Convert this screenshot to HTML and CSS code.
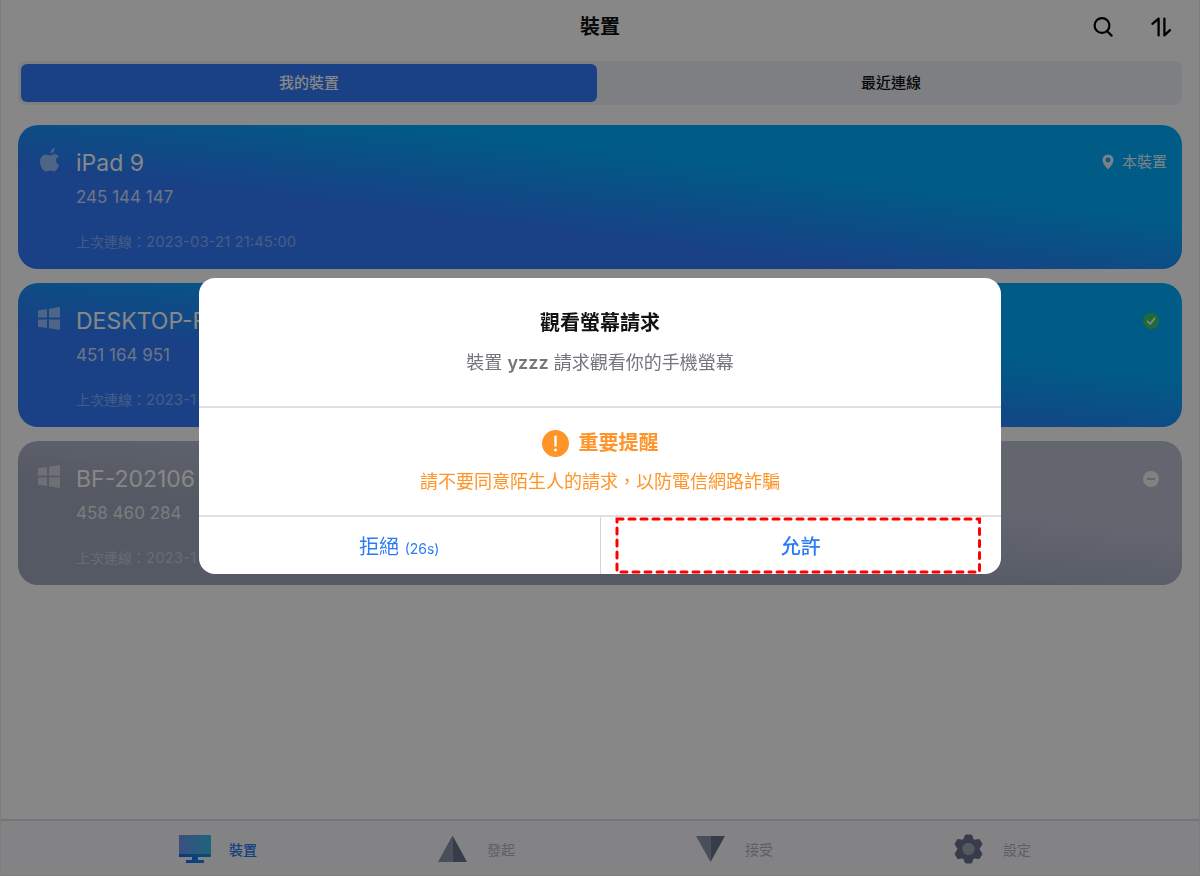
FILE: index.html
```html
<!DOCTYPE html>
<html lang="zh-Hant">
<head>
    <meta charset="UTF-8">
    <meta name="viewport" content="width=device-width, initial-scale=1">
    <title>裝置</title>
    <link rel="stylesheet" href="styles.css">
</head>
<body>
    <div class="app">
        <header class="header">
            <h1>裝置</h1>
            <div class="header-actions">
                <button type="button" class="icon-btn" aria-label="搜尋">
                    <svg width="22" height="22" viewBox="0 0 22 22" fill="none" stroke="#000" stroke-width="2.2" stroke-linecap="round">
                        <circle cx="10" cy="9.5" r="7.4"/>
                        <path d="M15 15l4.6 4.6"/>
                    </svg>
                </button>
                <button type="button" class="icon-btn" aria-label="排序">
                    <svg width="22" height="22" viewBox="0 0 22 22" fill="none" stroke="#000" stroke-width="2.3" stroke-linecap="round" stroke-linejoin="round">
                        <path d="M2.4 7.8L8.6 2.6V19.4M14.4 2.6V19.4L20 14.2"/>
                    </svg>
                </button>
            </div>
        </header>

        <div class="segment">
            <button type="button" class="segment-btn active">我的裝置</button>
            <button type="button" class="segment-btn">最近連線</button>
        </div>

        <main class="devices">
            <article class="device">
                <svg class="device-icon" viewBox="0 0 24 26">
                    <path fill="#fff" d="M12.6 6.4C12.4 3.900 14.400 1.400 16.700 1 17.100 3.700 15 6.200 12.600 6.400zM20.600 9.200C18.800 10.300 17.900 11.700 18 13.600 18.100 15.800 19.300 17.300 21.200 18 20.500 20.300 18.900 23.200 16.900 24.200 15.300 25 14 23.800 12 23.800 10 23.800 8.900 25 7.200 24.300 4.300 23.100 2 18.500 2 14.500 2 10.300 4.600 7.500 7.800 7.400 9.500 7.300 10.900 8.400 12 8.400 13.200 8.400 15 7.200 17.100 7.300 18.600 7.400 19.800 8.100 20.600 9.200z"/>
                </svg>
                <div class="device-info">
                    <h2>iPad 9</h2>
                    <p class="device-id">245 144 147</p>
                    <p class="device-time">上次連線：<span>2023-03-21 21:45:00</span></p>
                </div>
                <div class="device-tag">
                    <svg width="12" height="16" viewBox="0 0 12 16">
                        <path fill="#fff" fill-rule="evenodd" d="M6 .5A5.500 5.500 0 0 0 .5 6C.5 9.400 3.500 12.500 6 15.500 8.500 12.500 11.500 9.400 11.500 6A5.500 5.500 0 0 0 6 .5zM6 3.600a2.400 2.400 0 1 1 0 4.800 2.400 2.400 0 0 1 0-4.800z"/>
                    </svg>
                    <span>本裝置</span>
                </div>
            </article>

            <article class="device">
                <svg class="device-icon" viewBox="0 0 24 26">
                    <path fill="#fff" d="M0 5.300l9-1.200v8.400H0zM11 3.800L22 2v10.500H11zM0 14.500h9v8.400l-9-1.200zM11 14.500h11V25l-11-1.700z"/>
                </svg>
                <div class="device-info">
                    <h2>DESKTOP-F</h2>
                    <p class="device-id">451 164 951</p>
                    <p class="device-time">上次連線：<span>2023-1</span></p>
                </div>
                <svg class="device-status" viewBox="0 0 16 16">
                    <circle cx="8" cy="8" r="8" fill="#3fc86e"/>
                    <path d="M4.600 8.400l2.600 2.600L11.600 5.300" fill="none" stroke="#fff" stroke-width="1.600" stroke-linecap="round"/>
                </svg>
            </article>

            <article class="device offline">
                <svg class="device-icon" viewBox="0 0 24 26">
                    <path fill="#fff" d="M0 5.300l9-1.200v8.400H0zM11 3.800L22 2v10.500H11zM0 14.500h9v8.400l-9-1.200zM11 14.500h11V25l-11-1.700z"/>
                </svg>
                <div class="device-info">
                    <h2>BF-202106</h2>
                    <p class="device-id">458 460 284</p>
                    <p class="device-time">上次連線：<span>2023-1</span></p>
                </div>
                <svg class="device-status" viewBox="0 0 16 16">
                    <circle cx="8" cy="8" r="8" fill="#f4f4f4"/>
                    <path d="M4 8h8" stroke="#a9b0c3" stroke-width="1.500"/>
                </svg>
            </article>
        </main>

        <nav class="tabbar">
            <a href="#devices" class="tab active">
                <svg width="32" height="30" viewBox="0 0 32 30">
                    <defs>
                        <linearGradient id="screen">
                            <stop offset="0" stop-color="#6f95f5"/>
                            <stop offset="1" stop-color="#35c0e8"/>
                        </linearGradient>
                        <linearGradient id="stand">
                            <stop offset="0" stop-color="#2563e8"/>
                            <stop offset="1" stop-color="#1296ea"/>
                        </linearGradient>
                    </defs>
                    <path fill="url(#screen)" d="M0 1h32v19H0z"/>
                    <path fill="url(#stand)" d="M0 20h32v3H19v3h6v3H7v-3h6v-3H0z"/>
                </svg>
                <span>裝置</span>
            </a>
            <a href="#send" class="tab">
                <svg width="32" height="30" viewBox="0 0 32 30">
                    <path fill="#8b93ab" d="M15.500 1.500L1 28H15.500z"/>
                    <path fill="#69718a" d="M15.500 1.500L30 28H15.500z"/>
                </svg>
                <span>發起</span>
            </a>
            <a href="#receive" class="tab">
                <svg width="32" height="30" viewBox="0 0 32 30">
                    <path fill="#8b93ab" d="M1 2h14.500v26z"/>
                    <path fill="#69718a" d="M30 2H15.500v26z"/>
                </svg>
                <span>接受</span>
            </a>
            <a href="#settings" class="tab">
                <svg width="32" height="30" viewBox="0 0 32 30">
                    <path fill="#6a728c" stroke="#6a728c" stroke-width="1" stroke-linejoin="round" d="M12.500 1h6l1.600 4.200 1.600 1 4.600-.7 2.700 4.700-2.600 4.100v1.500l2.600 4.100-2.700 4.700-4.600-.7-1.600 1-1.600 4.100h-6l-1.600-4.100-1.600-1-4.600.7L2 19.900l2.600-4.100v-1.500L2 10.200l2.700-4.700 4.600.7 1.600-1z"/>
                    <circle cx="15.500" cy="15" r="6.200" fill="#a2a8b8"/>
                </svg>
                <span>設定</span>
            </a>
        </nav>
    </div>

    <div class="overlay">
        <div class="modal" role="dialog" aria-modal="true" aria-labelledby="modal-title">
            <section class="modal-body">
                <h2 id="modal-title">觀看螢幕請求</h2>
                <p>裝置 <strong>yzzz</strong> 請求觀看你的手機螢幕</p>
            </section>
            <section class="modal-warning">
                <h3>
                    <svg width="27" height="27" viewBox="0 0 27 27">
                        <circle cx="13.500" cy="13.500" r="13.500" fill="#ff9428"/>
                        <path d="M13.500 6.600v9" stroke="#fff" stroke-width="2.400" stroke-linecap="round"/>
                        <circle cx="13.500" cy="20" r="1.500" fill="#fff"/>
                    </svg>
                    <span>重要提醒</span>
                </h3>
                <p>請不要同意陌生人的請求，以防電信網路詐騙</p>
            </section>
            <div class="modal-actions">
                <button type="button" class="modal-btn">拒絕 <small>(26s)</small></button>
                <button type="button" class="modal-btn allow">
                    允許
                    <svg class="highlight">
                        <rect x="0" y="0" width="100%" height="100%"/>
                    </svg>
                </button>
            </div>
        </div>
    </div>
</body>
</html>
```
FILE: styles.css
```css
* {
    box-sizing: border-box;
}

body {
    margin: 0;
    background-color: #fff;
    color: #111;
    font-family: Inter, "Noto Sans CJK TC", sans-serif;
}

h1, h2, h3, p {
    margin: 0;
}

button {
    padding: 0;
    border: none;
    background: none;
    color: inherit;
    font-family: inherit;
    cursor: pointer;
}

svg {
    display: block;
}

.app {
    display: flex;
    flex-direction: column;
    min-height: 100vh;
    border: 1px solid #eee;
    border-top: none;
}

/* Header */
.header {
    display: grid;
    grid-template-columns: 1fr auto 1fr;
    align-items: center;
    height: 53px;
    padding: 0 27px;
}

.header h1 {
    grid-column: 2;
    font-size: 20px;
    line-height: 28px;
}

.header-actions {
    display: flex;
    justify-content: flex-end;
    gap: 36px;
}

/* Segmented switch */
.segment {
    display: flex;
    gap: 6px;
    margin: 8px 17px 20px;
    padding: 3px;
    border-radius: 8px;
    background-color: #eff0f6;
}

.segment-btn {
    flex: 1;
    height: 38px;
    padding-bottom: 3px;
    border-radius: 6px;
    font-size: 15px;
    font-weight: 500;
}

.segment-btn.active {
    background-color: #3179fb;
    color: #fff;
}

/* Device cards */
.devices {
    flex: 1;
    display: flex;
    flex-direction: column;
    gap: 14px;
    padding: 0 17px 20px;
}

.device {
    display: flex;
    align-items: flex-start;
    padding: 22px 15px 17px 20px;
    border-radius: 20px;
    background: linear-gradient(to top right, #3179fb 35%, #00acff 67%);
    color: #fff;
}

.device.offline {
    background: linear-gradient(to top right, #a0a8bb 35%, #bbc0d2 67%);
}

.device-icon {
    width: 24px;
    height: 26px;
    margin-right: 14px;
    opacity: 0.5;
}

.device-info {
    flex: 1;
}

.device-info h2 {
    font-size: 23px;
    font-weight: 400;
    line-height: 32px;
}

.device-id {
    margin-top: 6px;
    font-size: 17px;
    line-height: 24px;
    opacity: 0.75;
}

.device-time {
    margin-top: 22px;
    font-size: 14px;
    line-height: 21px;
    opacity: 0.4;
}

.device-time span {
    font-size: 15px;
}

.device-tag {
    display: flex;
    align-items: center;
    gap: 8px;
    height: 30px;
    font-size: 15px;
    line-height: 20px;
    opacity: 0.9;
}

.device-status {
    width: 16px;
    height: 16px;
    margin: 8px;
}

/* Bottom tabs */
.tabbar {
    display: flex;
    height: 56px;
    padding: 2px 78px 0 88px;
    border-top: 2px solid #dcdce0;
    background-color: #f7f7fb;
}

.tab {
    flex: 1;
    display: flex;
    align-items: center;
    justify-content: center;
    gap: 18px;
    color: #b4b4b8;
    font-size: 14px;
    text-decoration: none;
}

.tab.active {
    color: #2b78f0;
    font-weight: 500;
}

/* Request dialog */
.overlay {
    position: fixed;
    inset: 0;
    display: flex;
    align-items: center;
    justify-content: center;
    padding-bottom: 24px;
    background-color: rgba(0, 0, 0, 0.47);
}

.modal {
    width: 90%;
    max-width: 802px;
    border-radius: 16px;
    background-color: #fff;
    text-align: center;
    overflow: hidden;
}

.modal-body {
    padding: 31px 20px 31px;
    border-bottom: 2px solid #e0e0e1;
}

.modal-body h2 {
    font-size: 20px;
    line-height: 28px;
}

.modal-body p {
    margin-top: 14px;
    color: #75757c;
    font-size: 18px;
    line-height: 24px;
}

.modal-body strong {
    font-weight: 600;
}

.modal-warning {
    padding: 21px 20px;
    border-bottom: 2px solid #e0e0e1;
    color: #ff9428;
}

.modal-warning h3 {
    display: flex;
    align-items: center;
    justify-content: center;
    gap: 10px;
    font-size: 20px;
    line-height: 28px;
}

.modal-warning p {
    margin-top: 13px;
    font-size: 18px;
    line-height: 24px;
}

.modal-actions {
    display: flex;
}

.modal-btn {
    flex: 1;
    height: 57px;
    color: #2b7bf7;
    font-size: 20px;
}

.modal-btn small {
    font-size: 14px;
}

.modal-btn.allow {
    position: relative;
    border-left: 1px solid #d5d5d8;
    font-weight: 500;
}

/* Dashed frame around the allow button */
.highlight {
    position: absolute;
    top: 2px;
    left: 16px;
    width: calc(100% - 38px);
    height: 53px;
    overflow: visible;
}

.highlight rect {
    fill: none;
    stroke: #f00;
    stroke-width: 3;
    stroke-dasharray: 6 6;
    stroke-linecap: round;
}
```
